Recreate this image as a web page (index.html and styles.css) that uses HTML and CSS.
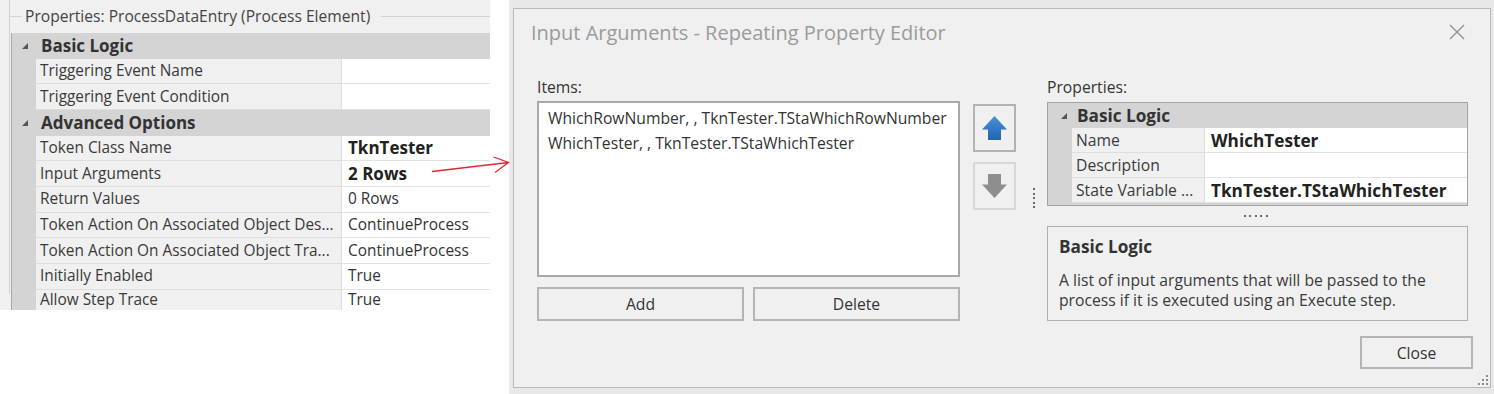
FILE: index.html
```html
<!DOCTYPE html>
<html>
<head>
<meta charset="utf-8">
<link rel="stylesheet" href="styles.css">
</head>
<body>
<div class="page">
  <section class="props-panel">
    <div class="group">
      <div class="group-head">
        <span class="gl-left"></span>
        <span class="gtext">Properties: ProcessDataEntry (Process Element)</span>
        <span class="gl-right"></span>
      </div>
      <div class="lgrid">
        <div class="cat"><svg class="tri" width="6" height="6" viewBox="0 0 6 6"><polygon points="6,0 6,6 0,6"/></svg><span class="cat-label">Basic Logic</span></div>
        <div class="row"><div class="gutter"></div><div class="name">Triggering Event Name</div><div class="val"></div></div>
        <div class="row"><div class="gutter"></div><div class="name">Triggering Event Condition</div><div class="val"></div></div>
        <div class="cat"><svg class="tri" width="6" height="6" viewBox="0 0 6 6"><polygon points="6,0 6,6 0,6"/></svg><span class="cat-label">Advanced Options</span></div>
        <div class="row"><div class="gutter"></div><div class="name">Token Class Name</div><div class="val bold">TknTester</div></div>
        <div class="row"><div class="gutter"></div><div class="name">Input Arguments</div><div class="val bold">2 Rows</div></div>
        <div class="row"><div class="gutter"></div><div class="name">Return Values</div><div class="val">0 Rows</div></div>
        <div class="row"><div class="gutter"></div><div class="name">Token Action On Associated Object Des...</div><div class="val">ContinueProcess</div></div>
        <div class="row"><div class="gutter"></div><div class="name">Token Action On Associated Object Tra...</div><div class="val">ContinueProcess</div></div>
        <div class="row"><div class="gutter"></div><div class="name">Initially Enabled</div><div class="val">True</div></div>
        <div class="row last"><div class="gutter"></div><div class="name">Allow Step Trace</div><div class="val">True</div></div>
      </div>
    </div>
  </section>

  <div class="dialog-frame">
    <div class="dialog">
      <header class="titlebar">
        <span class="title">Input Arguments - Repeating Property Editor</span>
        <svg class="xicon" width="16" height="16" viewBox="0 0 16 16"><path d="M1 1 L15 15 M15 1 L1 15"/></svg>
      </header>
      <div class="dbody">
        <div class="items-col">
          <div class="lbl">Items:</div>
          <div class="listbox">
            <div class="li">WhichRowNumber, , TknTester.TStaWhichRowNumber</div>
            <div class="li">WhichTester, , TknTester.TStaWhichTester</div>
          </div>
          <div class="btns">
            <button class="btn wide">Add</button>
            <button class="btn wide">Delete</button>
          </div>
        </div>
        <div class="arrow-col">
          <div class="abtn">
            <svg width="25" height="25" viewBox="0 0 25 25"><defs><linearGradient id="gu" x1="0" y1="0" x2="0" y2="1"><stop offset="0" stop-color="#4a90d6"/><stop offset="1" stop-color="#1f66b3"/></linearGradient></defs><path d="M12.5 0 L25 13.5 L19 13.5 L19 24 L6 24 L6 13.5 L0 13.5 Z" fill="url(#gu)"/></svg>
          </div>
          <div class="abtn disabled">
            <svg width="25" height="25" viewBox="0 0 25 25"><path d="M6 0 L19 0 L19 10.5 L25 10.5 L12.5 24 L0 10.5 L6 10.5 Z" fill="#8e8e8e"/></svg>
          </div>
        </div>
        <div class="vsplit"><i></i><i></i><i></i><i></i><i></i></div>
        <div class="props-col">
          <div class="lbl">Properties:</div>
          <div class="dgrid">
            <div class="dcat"><svg class="tri" width="6" height="6" viewBox="0 0 6 6"><polygon points="6,0 6,6 0,6"/></svg><span class="cat-label">Basic Logic</span></div>
            <div class="drow"><div class="dgutter"></div><div class="dname">Name</div><div class="dval bold">WhichTester</div></div>
            <div class="drow"><div class="dgutter"></div><div class="dname">Description</div><div class="dval"></div></div>
            <div class="drow"><div class="dgutter"></div><div class="dname">State Variable ...</div><div class="dval bold">TknTester.TStaWhichTester</div></div>
          </div>
          <div class="hsplit"><i></i><i></i><i></i><i></i><i></i></div>
          <div class="descbox">
            <div class="desc-title">Basic Logic</div>
            <p class="desc-text">A list of input arguments that will be passed to the<br>process if it is executed using an Execute step.</p>
          </div>
        </div>
      </div>
      <footer class="dfoot">
        <button class="btn close">Close</button>
      </footer>
      <svg class="grip" width="10" height="10" viewBox="0 0 10 10"><rect x="8" y="0" width="2" height="2"/><rect x="4" y="4" width="2" height="2"/><rect x="8" y="4" width="2" height="2"/><rect x="0" y="8" width="2" height="2"/><rect x="4" y="8" width="2" height="2"/><rect x="8" y="8" width="2" height="2"/></svg>
    </div>
  </div>
</div>
<svg class="red-arrow" width="1494" height="394" viewBox="0 0 1494 394"><path d="M432 171.5 L508.5 162.5 M493.5 157 L508.5 162.5 L495 172.5"/></svg>
</body>
</html>
```

FILE: styles.css
```css
* { box-sizing: border-box; }
html, body { margin: 0; padding: 0; background: #ffffff; }
body {
  font-family: "Open Sans", "Noto Sans", sans-serif;
  color: #333333;
  width: 1494px;
  height: 394px;
  overflow: hidden;
  position: relative;
}
.page { display: flex; align-items: flex-start; height: 394px; }

/* ---------- left property panel ---------- */
.props-panel {
  flex: none;
  width: 490px;
  height: 310px;
  background: #f0f0f0;
  overflow: hidden;
  padding-top: 16px;
}
.group { margin-left: 9px; border-left: 1px solid #d3d3d3; height: 100%; }
.group-head { margin-top: -16px; height: 32px; display: flex; align-items: center; }
.gl-left { width: 12px; height: 1px; background: #d3d3d3; }
.gtext { padding: 0 3px; font-size: 15.6px; color: #444444; white-space: nowrap; }
.gl-right { flex: 1; height: 1px; background: #d3d3d3; margin-left: 8px; }

.lgrid {
  margin: 1px 0 0 1px;
  width: 640px;
  border-left: 1px solid #a9a9a9;
  font-size: 15.4px;
}
.cat {
  display: flex;
  align-items: center;
  height: 25.67px;
  background: #d4d4d4;
  font-weight: 700;
  font-size: 17px;
  color: #333333;
}
.tri { fill: #555555; flex: none; }
.cat .tri { margin-left: 10px; }
.cat-label { margin-left: 13px; }
.row { display: flex; height: 25.67px; line-height: 18px; }
.row.last { height: 20.3px; }
.row.last .name, .row.last .val { border-bottom: none; }
.gutter { flex: none; width: 24px; background: #d4d4d4; }
.name {
  flex: none;
  width: 306px;
  background: #f0f0f0;
  border-bottom: 1px solid #dedede;
  border-right: 1px solid #dedede;
  padding-left: 4px;
  white-space: nowrap;
  overflow: hidden;
  display: flex;
  align-items: center;
  color: #3a3a3a;
}
.val {
  flex: 1;
  background: #ffffff;
  border-bottom: 1px solid #e3e3e3;
  padding-left: 6px;
  display: flex;
  align-items: center;
  white-space: nowrap;
  color: #333333;
}
.bold { font-weight: 700; color: #222222; }
.val.bold { font-size: 17px; }

/* ---------- dialog ---------- */
.dialog-frame {
  flex: none;
  margin-left: 19px;
  width: 985px;
  height: 394px;
  background: #e8e8e8;
  padding: 8px 3px 6px 4px;
}
.dialog {
  position: relative;
  height: 100%;
  border: 1px solid #b8b8b8;
  background: #f0f0f0;
  display: flex;
  flex-direction: column;
  font-size: 15.7px;
}
.titlebar {
  flex: none;
  height: 46px;
  padding: 0 25px 0 17px;
  display: flex;
  align-items: center;
  justify-content: space-between;
}
.title { font-size: 20px; color: #9b9b9b; }
.xicon { stroke: #8f8f8f; stroke-width: 1.3; fill: none; }

.dbody { display: flex; padding: 23px 22px 0 23px; }
.lbl { height: 18px; line-height: 18px; color: #333333; }
.items-col { flex: none; width: 423px; }
.items-col .lbl { margin-bottom: 5px; }
.listbox {
  height: 176px;
  background: #ffffff;
  border: 2px solid #a9a9a9;
  padding: 3px 0 0 9px;
}
.li { line-height: 25px; white-space: nowrap; color: #333333; }
.btns { display: flex; gap: 9px; margin-top: 10px; }
.btn {
  font-family: inherit;
  font-size: 15.7px;
  color: #333333;
  background: #f0f0f0;
  border: 2px solid #b5b5b5;
  padding: 0;
  margin: 0;
}
.btn.wide { width: 207px; height: 34px; }

.arrow-col {
  flex: none;
  width: 43px;
  margin-left: 13px;
  padding-top: 26px;
  display: flex;
  flex-direction: column;
  gap: 10px;
}
.abtn {
  width: 43px;
  height: 48px;
  border: 2px solid #b3b3b3;
  background: #f0f0f0;
  display: flex;
  align-items: center;
  justify-content: center;
}
.abtn.disabled { border-color: #d8d8d8; }

.vsplit {
  flex: none;
  width: 31px;
  padding: 110px 0 0 17px;
  display: flex;
  flex-direction: column;
  gap: 2.5px;
}
.vsplit i, .hsplit i { display: block; width: 2px; height: 2px; background: #6a6a6a; }

.props-col { flex: none; width: 421px; }
.props-col .lbl { margin-bottom: 6px; }
.dgrid {
  border: 1px solid #a3a3a3;
  background: #d4d4d4;
  padding-bottom: 2px;
}
.dcat {
  display: flex;
  align-items: center;
  height: 25px;
  font-weight: 700;
  font-size: 17.2px;
  color: #333333;
}
.dcat .tri { margin-left: 13px; }
.dcat .cat-label { margin-left: 10px; }
.drow { display: flex; height: 25px; }
.dgutter { flex: none; width: 24px; }
.dname {
  flex: none;
  width: 133px;
  background: #f0f0f0;
  border-right: 1px solid #dedede;
  border-bottom: 1px solid #dedede;
  padding-left: 4px;
  display: flex;
  align-items: center;
  white-space: nowrap;
  overflow: hidden;
  color: #3a3a3a;
}
.dval {
  flex: 1;
  background: #ffffff;
  border-bottom: 1px solid #e3e3e3;
  padding-left: 6px;
  display: flex;
  align-items: center;
  white-space: nowrap;
}
.dval.bold { font-size: 17.2px; }
.hsplit {
  height: 20px;
  display: flex;
  justify-content: center;
  align-items: center;
  gap: 3.5px;
  padding-right: 4px;
}
.descbox {
  height: 95px;
  border: 1px solid #b0b0b0;
  padding: 10px 11px;
}
.desc-title { font-weight: 700; font-size: 17.2px; line-height: 20px; color: #333333; }
.desc-text { margin: 13px 0 0 0; line-height: 20px; color: #3a3a3a; }

.dfoot { display: flex; justify-content: flex-end; padding: 15px 17px 0 0; }
.btn.close { width: 113px; height: 33px; }

.grip { position: absolute; right: 2px; bottom: 2px; fill: #8a8a8a; }

.red-arrow {
  position: absolute;
  left: 0;
  top: 0;
  pointer-events: none;
  fill: none;
  stroke: #e0282e;
  stroke-width: 1.3;
}
```
